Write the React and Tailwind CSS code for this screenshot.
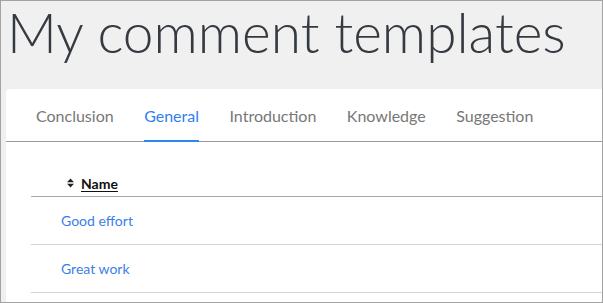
import React from "react";

const tabs = ["Conclusion", "General", "Introduction", "Knowledge", "Suggestion"];
const rows = ["Good effort", "Great work"];

export default function App() {
    return (
        <div
            className="w-[603px] h-[303px] overflow-hidden border border-[#a3a3a3] bg-[#f0f0f0] text-[#343a40]"
            style={{ fontFamily: "Lato, 'Open Sans', sans-serif" }}
        >
            {/* page title */}
            <h1 className="pl-[6px] text-[55px] leading-[62px] font-light h-[88px] whitespace-nowrap">
                My comment templates
            </h1>

            {/* card */}
            <div className="ml-[5px] bg-white rounded-tl-[4px] h-[260px]">
                <ul className="flex gap-[30.5px] pl-[30px] border-b border-[#999] h-[53px]">
                    {tabs.map((t) => (
                        <li
                            key={t}
                            className={`flex items-center text-[16px] border-b-2 -mb-px pt-[2px] ${t === "General"
                                ? "text-[#2f80ed] border-[#2f86ee]"
                                : "text-[#777] border-transparent"
                                }`}
                        >
                            {t}
                        </li>
                    ))}
                </ul>

                {/* templates table */}
                <div className="ml-[25px] mt-[30px] text-[14px]">
                    <div className="flex items-center h-[25px] border-b border-[#a8a8a8] pl-[36px] pb-[2px]">
                        <svg width="7" height="10" viewBox="0 0 7 10" className="mr-[7px]">
                            <path d="M3.5 0.5 L7 4.3 L0 4.3 Z M3.5 9.5 L7 5.7 L0 5.7 Z" fill="#222" />
                        </svg>
                        <span className="font-bold text-[#111] underline underline-offset-2">Name</span>
                    </div>
                    {rows.map((r) => (
                        <div
                            key={r}
                            className="flex items-center h-[48px] border-b border-[#d4d4d4] pl-[30px] text-[#3b7ee8]"
                        >
                            {r}
                        </div>
                    ))}
                </div>
            </div>
        </div>
    );
}
